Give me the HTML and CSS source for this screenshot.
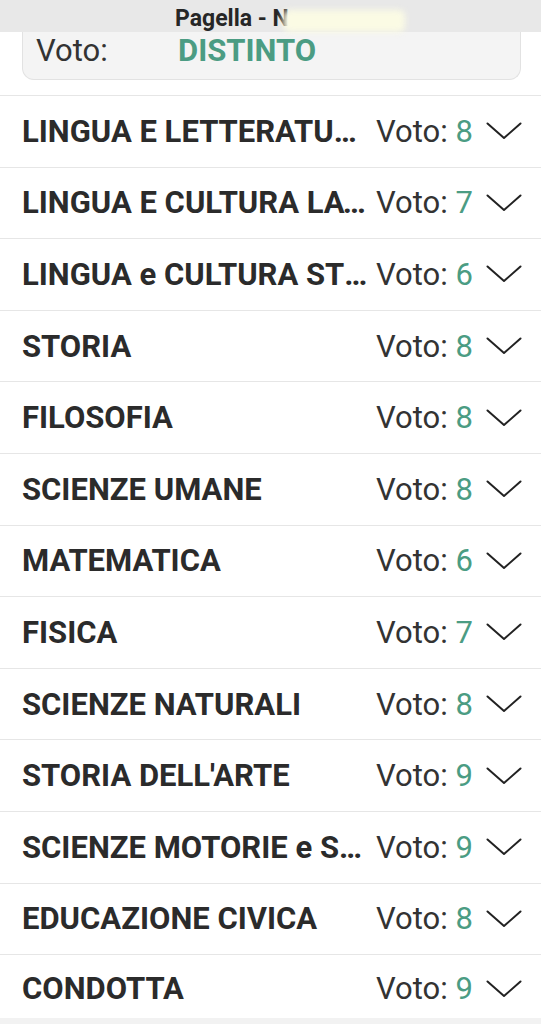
FILE: index.html
```html
<!DOCTYPE html>
<html lang="it">
<head>
<meta charset="utf-8">
<title>Pagella</title>
<link rel="stylesheet" href="styles.css">
</head>
<body>
<header class="topbar">
  <span class="title">Pagella - N</span>
  <span class="smudge"></span>
</header>
<main class="content">
  <div class="summary">
    <span class="summary-label">Voto:</span>
    <span class="summary-value">DISTINTO</span>
  </div>
  <ul class="subjects">
    <li class="row"><span class="name">LINGUA E LETTERATURA ITALIANA</span><span class="grade">Voto: <b>8</b></span><svg class="chev" viewBox="0 0 36 18"><path d="M1.5 1.5 L18 16 L34.5 1.5"/></svg></li>
    <li class="row"><span class="name">LINGUA E CULTURA LATINA</span><span class="grade">Voto: <b>7</b></span><svg class="chev" viewBox="0 0 36 18"><path d="M1.5 1.5 L18 16 L34.5 1.5"/></svg></li>
    <li class="row"><span class="name">LINGUA e CULTURA STRANIERA</span><span class="grade">Voto: <b>6</b></span><svg class="chev" viewBox="0 0 36 18"><path d="M1.5 1.5 L18 16 L34.5 1.5"/></svg></li>
    <li class="row"><span class="name">STORIA</span><span class="grade">Voto: <b>8</b></span><svg class="chev" viewBox="0 0 36 18"><path d="M1.5 1.5 L18 16 L34.5 1.5"/></svg></li>
    <li class="row"><span class="name">FILOSOFIA</span><span class="grade">Voto: <b>8</b></span><svg class="chev" viewBox="0 0 36 18"><path d="M1.5 1.5 L18 16 L34.5 1.5"/></svg></li>
    <li class="row"><span class="name">SCIENZE UMANE</span><span class="grade">Voto: <b>8</b></span><svg class="chev" viewBox="0 0 36 18"><path d="M1.5 1.5 L18 16 L34.5 1.5"/></svg></li>
    <li class="row"><span class="name">MATEMATICA</span><span class="grade">Voto: <b>6</b></span><svg class="chev" viewBox="0 0 36 18"><path d="M1.5 1.5 L18 16 L34.5 1.5"/></svg></li>
    <li class="row"><span class="name">FISICA</span><span class="grade">Voto: <b>7</b></span><svg class="chev" viewBox="0 0 36 18"><path d="M1.5 1.5 L18 16 L34.5 1.5"/></svg></li>
    <li class="row"><span class="name">SCIENZE NATURALI</span><span class="grade">Voto: <b>8</b></span><svg class="chev" viewBox="0 0 36 18"><path d="M1.5 1.5 L18 16 L34.5 1.5"/></svg></li>
    <li class="row"><span class="name">STORIA DELL'ARTE</span><span class="grade">Voto: <b>9</b></span><svg class="chev" viewBox="0 0 36 18"><path d="M1.5 1.5 L18 16 L34.5 1.5"/></svg></li>
    <li class="row"><span class="name">SCIENZE MOTORIE e SPORTIVE</span><span class="grade">Voto: <b>9</b></span><svg class="chev" viewBox="0 0 36 18"><path d="M1.5 1.5 L18 16 L34.5 1.5"/></svg></li>
    <li class="row"><span class="name">EDUCAZIONE CIVICA</span><span class="grade">Voto: <b>8</b></span><svg class="chev" viewBox="0 0 36 18"><path d="M1.5 1.5 L18 16 L34.5 1.5"/></svg></li>
    <li class="row last"><span class="name">CONDOTTA</span><span class="grade">Voto: <b>9</b></span><svg class="chev" viewBox="0 0 36 18"><path d="M1.5 1.5 L18 16 L34.5 1.5"/></svg></li>
  </ul>
</main>
</body>
</html>
```
FILE: styles.css
```css
html, body {
  margin: 0;
  padding: 0;
  background: #f2f2f2;
  font-family: Roboto, "Liberation Sans", sans-serif;
  color: #2b2b2b;
}
body {
  width: 541px;
  height: 1024px;
  overflow: hidden;
  position: relative;
}
.topbar {
  height: 32px;
  background: #e8e8e8;
  position: relative;
  z-index: 2;
  overflow: visible;
}
.title {
  position: absolute;
  left: 175px;
  top: 4px;
  font-size: 23px;
  font-weight: 700;
  color: #262626;
  line-height: 30px;
  white-space: nowrap;
}
.smudge {
  position: absolute;
  left: 283px;
  top: 10px;
  width: 122px;
  height: 22px;
  background: #fbfbe4;
  filter: blur(3px);
  border-radius: 6px;
}
.content {
  background: #fff;
}
.summary {
  margin: 0 20px 0 22px;
  height: 47px;
  background: #f4f4f4;
  border: 1px solid #e2e2e2;
  border-top: none;
  border-radius: 0 0 12px 12px;
  display: flex;
  align-items: flex-start;
  box-sizing: content-box;
}
.summary-label {
  font-size: 31px;
  line-height: 38px;
  color: #333;
  padding-left: 13px;
  width: 142px;
}
.summary-value {
  font-size: 31px;
  line-height: 38px;
  font-weight: 700;
  color: #4b9c83;
}
.subjects {
  list-style: none;
  margin: 15px 0 0 0;
  padding: 0;
}
.row {
  display: flex;
  align-items: center;
  height: 71.6px;
  box-sizing: border-box;
  border-top: 1.5px solid #e6e6e6;
  padding: 0 19px 0 22px;
  background: #fff;
}
.row.last {
  height: 64px;
  padding-top: 4px;
}
.name {
  flex: 1;
  min-width: 0;
  font-size: 31px;
  font-weight: 700;
  white-space: nowrap;
  overflow: hidden;
  text-overflow: ellipsis;
  color: #2b2b2b;
}
.grade {
  flex: none;
  margin-left: 4px;
  width: 110px;
  font-size: 31px;
  font-weight: 400;
  color: #333;
  white-space: nowrap;
}
.grade b {
  font-weight: 400;
  color: #4b9c83;
}
.chev {
  flex: none;
  width: 36px;
  height: 18px;
  fill: none;
  stroke: #222;
  stroke-width: 2;
  stroke-linecap: round;
  stroke-linejoin: round;
}
```
